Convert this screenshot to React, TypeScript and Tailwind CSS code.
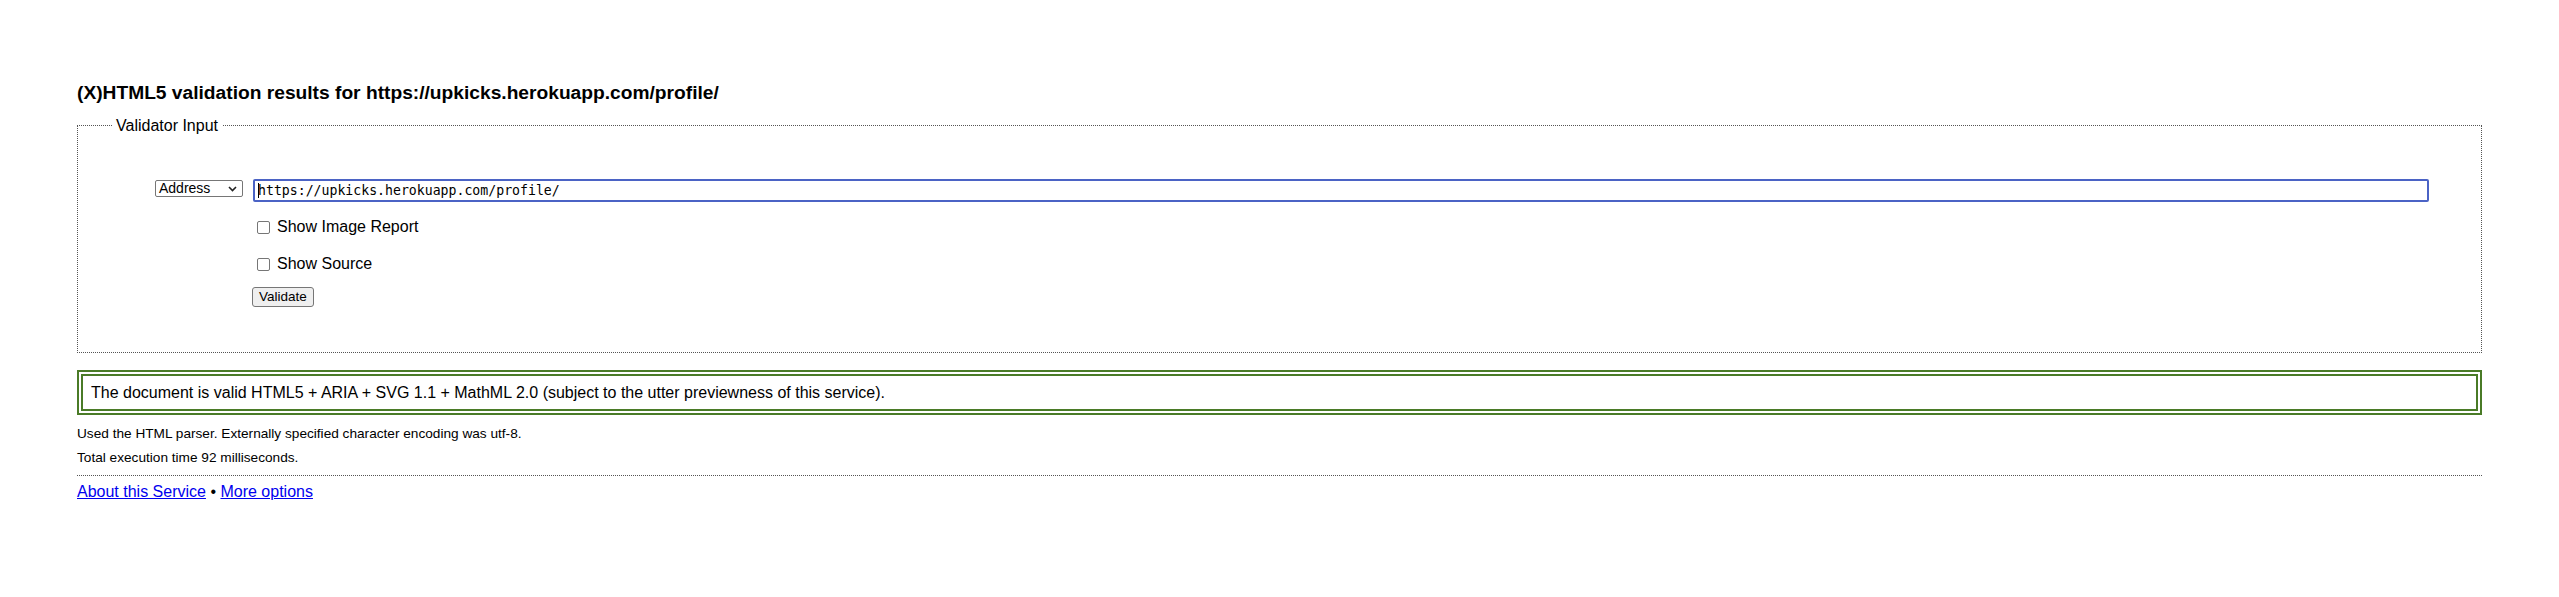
import React from "react";

const sans = { fontFamily: '"Liberation Sans", Arial, sans-serif' };

function Checkbox() {
  return <span className="inline-block w-[13px] h-[13px] border border-[#767676] rounded-[2px] bg-white shrink-0" />;
}

export default function App() {
  return (
    <div className="min-h-[597px] bg-white text-black px-[77px] pt-[82px]" style={sans}>
      <h2 className="text-[19.2px] leading-[22px] font-bold">
        (X)HTML5 validation results for https://upkicks.herokuapp.com/profile/
      </h2>

      <fieldset className="mt-[12px] border border-dotted border-[#555]">
        <legend className="ml-[34px] px-[4px] text-[16px] leading-[19px]">Validator Input</legend>
        <div className="pt-[44px] pb-[44px] pr-[52px] flex">
          <div className="w-[175px] shrink-0 flex justify-end pr-[10px]">
            <div className="mt-[1px] w-[88px] h-[17px] border border-[#767676] rounded-[2px] bg-white flex items-center justify-between pl-[3px] pr-[5px] text-[14px] leading-[15px]">
              <span>Address</span>
              <svg width="9" height="6" viewBox="0 0 9 6">
                <polyline points="1,1 4.5,4.5 8,1" fill="none" stroke="#222" strokeWidth="1.6" />
              </svg>
            </div>
          </div>
          <div className="flex-1 flex flex-col">
            <div className="h-[23px] border-2 border-[#4b63c5] rounded-[2px] flex items-center pl-[3px]">
              <span className="inline-block w-px h-[15px] bg-black -mr-px" />
              <span className="text-[13.2px] leading-[15px]" style={{ fontFamily: '"DejaVu Sans Mono", monospace' }}>
                https://upkicks.herokuapp.com/profile/
              </span>
            </div>
            <label className="mt-[16px] h-[18px] flex items-center pl-[4px] gap-[7px] text-[16px] leading-[18px]">
              <Checkbox />
              <span>Show Image Report</span>
            </label>
            <label className="mt-[19px] h-[18px] flex items-center pl-[4px] gap-[7px] text-[16px] leading-[18px]">
              <Checkbox />
              <span>Show Source</span>
            </label>
            <div className="mt-[11px]">
              <button className="-ml-px w-[62px] h-[20px] border border-[#767676] rounded-[3px] bg-[#efefef] text-[13.5px] leading-[15px]">
                Validate
              </button>
            </div>
          </div>
        </div>
      </fieldset>

      <div className="mt-[17px] border-2 border-[#4a7b27] p-[2px]">
        <div className="border-2 border-[#4a7b27] px-[8px] py-[7px] text-[16px] leading-[19px]">
          The document is valid HTML5 + ARIA + SVG 1.1 + MathML 2.0 (subject to the utter previewness of this service).
        </div>
      </div>

      <p className="mt-[11px] text-[13.65px] leading-[16px]">
        Used the HTML parser. Externally specified character encoding was utf-8.
      </p>
      <p className="mt-[8px] text-[13.65px] leading-[16px]">Total execution time 92 milliseconds.</p>

      <hr className="mt-[9px] border-0 border-t border-dotted border-[#555]" />

      <p className="mt-[7px] text-[16px] leading-[18px]">
        <a href="#" className="text-[#0000ee] underline">About this Service</a>
        {" \u2022 "}
        <a href="#" className="text-[#0000ee] underline">More options</a>
      </p>
    </div>
  );
}
